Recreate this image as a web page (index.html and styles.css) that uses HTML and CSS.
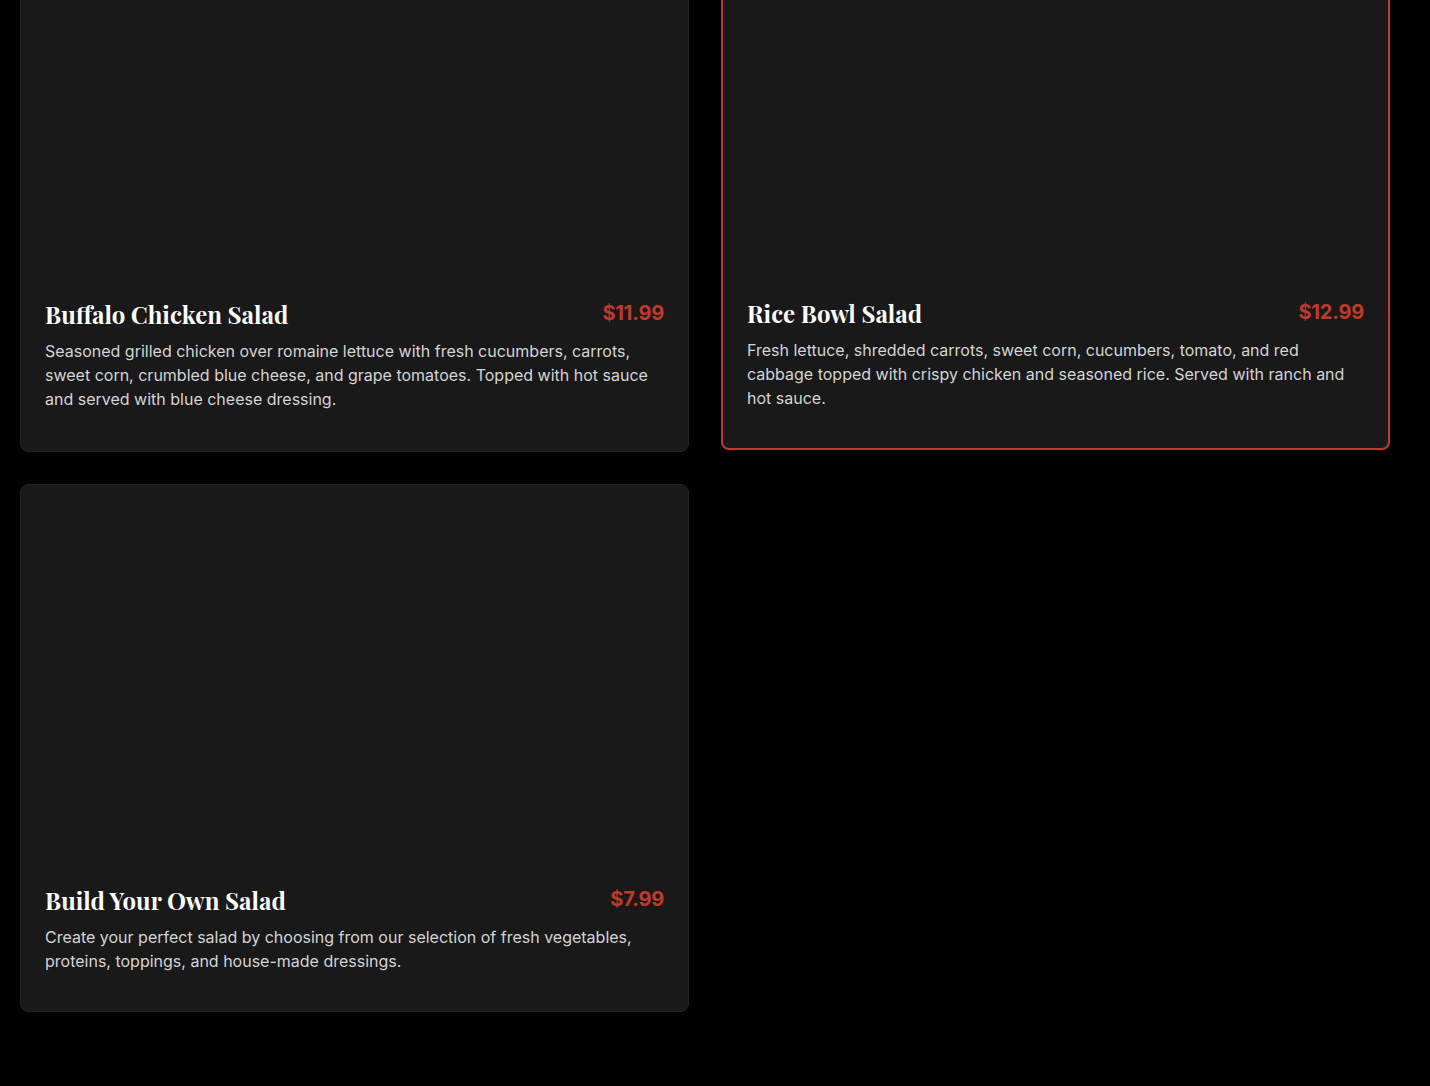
FILE: index.html
```html
<!DOCTYPE html>
<html lang="en">
<head>
<meta charset="utf-8">
<title>Salads</title>
<link rel="stylesheet" href="styles.css">
</head>
<body>
<main class="menu">
  <article class="card">
    <div class="card-image"></div>
    <div class="card-body">
      <div class="card-head">
        <h3 class="card-title">Buffalo Chicken Salad</h3>
        <span class="card-price">$11.99</span>
      </div>
      <p class="card-desc">Seasoned grilled chicken over romaine lettuce with fresh cucumbers, carrots, sweet corn, crumbled blue cheese, and grape tomatoes. Topped with hot sauce and served with blue cheese dressing.</p>
    </div>
  </article>
  <article class="card card-active">
    <div class="card-image"></div>
    <div class="card-body">
      <div class="card-head">
        <h3 class="card-title">Rice Bowl Salad</h3>
        <span class="card-price">$12.99</span>
      </div>
      <p class="card-desc">Fresh lettuce, shredded carrots, sweet corn, cucumbers, tomato, and red cabbage topped with crispy chicken and seasoned rice. Served with ranch and hot sauce.</p>
    </div>
  </article>
  <article class="card">
    <div class="card-image"></div>
    <div class="card-body">
      <div class="card-head">
        <h3 class="card-title">Build Your Own Salad</h3>
        <span class="card-price">$7.99</span>
      </div>
      <p class="card-desc">Create your perfect salad by choosing from our selection of fresh vegetables, proteins, toppings, and house-made dressings.</p>
    </div>
  </article>
</main>
</body>
</html>
```

FILE: styles.css
```css
html, body {
  margin: 0;
  padding: 0;
  background: #000;
}

body {
  font-family: Inter, "Noto Sans", sans-serif;
  color: #fff;
}

.menu {
  display: grid;
  grid-template-columns: 1fr 1fr;
  gap: 32px;
  margin-top: -102px;
  padding: 0 40px 74px 20px;
}

.card {
  display: flex;
  flex-direction: column;
  background: #191919;
  border: 1px solid #222;
  border-radius: 8px;
  overflow: hidden;
}

.card-active {
  border: 2px solid #c0392b;
  transform: translateY(-2px);
  box-shadow: 0 10px 24px rgba(0, 0, 0, 0.6);
}

.card-image {
  height: 375px;
  background: #191919;
  flex-shrink: 0;
}

.card-body {
  padding: 24px 24px 38px;
}

.card-head {
  display: flex;
  justify-content: space-between;
  align-items: flex-start;
  gap: 16px;
  margin-bottom: 9px;
}

.card-title {
  margin: 0;
  font-family: "Playfair Display", "Liberation Serif", serif;
  font-weight: 700;
  font-size: 24px;
  line-height: 32px;
  color: #fff;
}

.card-price {
  margin-top: 3px;
  font-family: Inter, sans-serif;
  font-weight: 700;
  font-size: 20px;
  line-height: 24px;
  letter-spacing: -0.2px;
  color: #c0392b;
  white-space: nowrap;
}

.card-desc {
  margin: 0;
  font-size: 16px;
  line-height: 24px;
  color: #d4d4d4;
}
```
